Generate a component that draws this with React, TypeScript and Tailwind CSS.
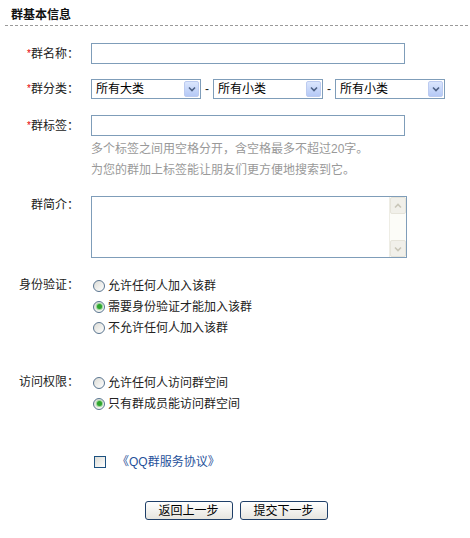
const labelCls =
  "w-[79px] shrink-0 text-right text-[12px] leading-[18px] text-[#222]";

function Req({ children }: { children: string }) {
  return (
    <span className={labelCls}>
      <span className="text-[10px] text-[#e60000] align-top">*</span>
      {children}
    </span>
  );
}

function Chevron({ color, down = true }: { color: string; down?: boolean }) {
  return (
    <svg width="8" height="6" viewBox="0 0 8 6">
      <path
        d={down ? "M1 1.5 L4 4.5 L7 1.5" : "M1 4.5 L4 1.5 L7 4.5"}
        fill="none"
        stroke={color}
        strokeWidth="1.6"
      />
    </svg>
  );
}

function FakeSelect({ value }: { value: string }) {
  return (
    <div className="flex h-[20px] w-[110px] items-center justify-between border border-[#7f9db9] bg-white pl-[4px] pr-[1px]">
      <span className="text-[12px] leading-[14px] text-black">{value}</span>
      <span className="flex h-[16px] w-[15px] items-center justify-center rounded-[2px] border border-[#bccbf0] bg-gradient-to-b from-[#dbe6fd] to-[#b5c9f6]">
        <Chevron color="#4d6185" />
      </span>
    </div>
  );
}

function Radio({ checked = false, label }: { checked?: boolean; label: string }) {
  return (
    <div className="flex h-[21px] items-center">
      <span className="ml-[2px] flex h-[12px] w-[12px] items-center justify-center rounded-full border border-[#5a7590] bg-gradient-to-br from-[#dcdcd6] to-white">
        {checked && <span className="h-[5px] w-[5px] rounded-full bg-[#2ea52e] shadow-[0_0_1px_1px_#8fd28f]" />}
      </span>
      <span className="ml-[3px] text-[12px] leading-[14px] text-[#222]">{label}</span>
    </div>
  );
}

export default function App() {
  return (
    <div className="w-[470px] h-[538px] bg-white font-['Liberation_Sans','Noto_Sans_CJK_SC',sans-serif] flex flex-col">
      {/* ── Header ───────────────────────────────────────────── */}
      <p className="pt-[8px] pl-[11px] text-[12px] leading-[14px] font-bold text-[#111]">群基本信息</p>
      <div className="mt-[3px] ml-[5px] mr-[2px] border-t border-dashed border-[#9a9a9a]" />

      {/* ── 群名称 ──────────────────────────────────────────── */}
      <div className="mt-[17px] flex items-center gap-[12px]">
        <Req>群名称：</Req>
        <input className="h-[21px] w-[314px] border border-[#7f9db9] bg-white outline-none" />
      </div>

      {/* ── 群分类 ──────────────────────────────────────────── */}
      <div className="mt-[15px] flex items-center gap-[12px]">
        <Req>群分类：</Req>
        <div className="flex items-center">
          <FakeSelect value="所有大类" />
          <span className="w-[12px] text-center text-[12px] leading-[14px] text-[#222]">-</span>
          <FakeSelect value="所有小类" />
          <span className="w-[12px] text-center text-[12px] leading-[14px] text-[#222]">-</span>
          <FakeSelect value="所有小类" />
        </div>
      </div>

      {/* ── 群标签 + hints ─────────────────────────────────── */}
      <div className="mt-[16px] flex items-center gap-[12px]">
        <Req>群标签：</Req>
        <input className="h-[21px] w-[314px] border border-[#7f9db9] bg-white outline-none" />
      </div>
      <div className="mt-[3px] pl-[91px] text-[12px] leading-[21px] text-[#999]">
        <p>多个标签之间用空格分开，含空格最多不超过20字。</p>
        <p>为您的群加上标签能让朋友们更方便地搜索到它。</p>
      </div>

      {/* ── 群简介 ──────────────────────────────────────────── */}
      <div className="mt-[15px] flex items-start gap-[12px]">
        <span className={labelCls}>群简介：</span>
        <div className="flex h-[62px] w-[316px] border border-[#7f9db9] bg-white">
          <div className="flex-1" />
          <div className="flex w-[17px] flex-col justify-between border-l border-[#eeede5] bg-[#fcfcf8]">
            <span className="flex h-[17px] items-center justify-center rounded-[2px] border border-[#e6e4da] bg-[#f1f0ea]">
              <Chevron color="#c9c6b8" down={false} />
            </span>
            <span className="flex h-[17px] items-center justify-center rounded-[2px] border border-[#e6e4da] bg-[#f1f0ea]">
              <Chevron color="#c9c6b8" />
            </span>
          </div>
        </div>
      </div>

      {/* ── 身份验证 ────────────────────────────────────────── */}
      <div className="mt-[17px] flex items-start gap-[12px]">
        <span className={`${labelCls} mt-[1px]`}>身份验证：</span>
        <div className="flex flex-col">
          <Radio label="允许任何人加入该群" />
          <Radio checked label="需要身份验证才能加入该群" />
          <Radio label="不允许任何人加入该群" />
        </div>
      </div>

      {/* ── 访问权限 ────────────────────────────────────────── */}
      <div className="mt-[34px] flex items-start gap-[12px]">
        <span className={`${labelCls} mt-[1px]`}>访问权限：</span>
        <div className="flex flex-col">
          <Radio label="允许任何人访问群空间" />
          <Radio checked label="只有群成员能访问群空间" />
        </div>
      </div>

      {/* ── 协议 ────────────────────────────────────────────── */}
      <div className="mt-[37px] flex h-[21px] items-center pl-[94px]">
        <span className="h-[12px] w-[12px] border border-[#1c5180] bg-gradient-to-br from-[#dcdcd6] to-white" />
        <a className="ml-[11px] text-[12px] leading-[14px] text-[#1f519a]">《QQ群服务协议》</a>
      </div>

      {/* ── Buttons ─────────────────────────────────────────── */}
      <div className="mt-[29px] flex justify-center gap-[7px] pl-[2px]">
        <button className="h-[19px] w-[88px] rounded-[3px] border border-[#1f3f68] bg-gradient-to-b from-white to-[#e6e5df] text-[12px] leading-[14px] text-black">
          返回上一步
        </button>
        <button className="h-[19px] w-[88px] rounded-[3px] border border-[#1f3f68] bg-gradient-to-b from-white to-[#e6e5df] text-[12px] leading-[14px] text-black">
          提交下一步
        </button>
      </div>
    </div>
  );
}
